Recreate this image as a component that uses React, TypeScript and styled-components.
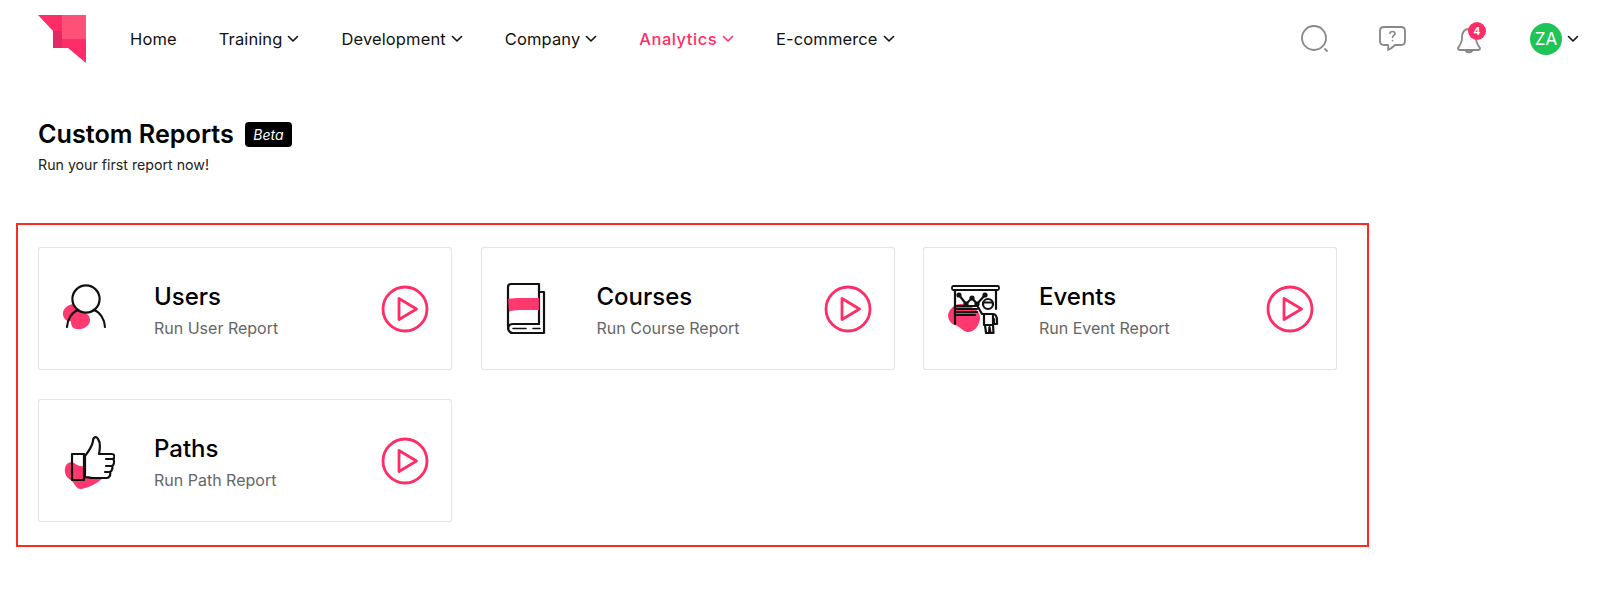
import styled, { createGlobalStyle } from 'styled-components';

const accent = '#ff2d67';

const GlobalStyle = createGlobalStyle`
  html, body {
    margin: 0;
    padding: 0;
    background: #fff;
    font-family: 'Inter', 'Noto Sans', sans-serif;
    color: #000;
  }
  * {
    box-sizing: border-box;
  }
`;

const Page = styled.div`
  width: 1600px;
  height: 612px;
  overflow: hidden;
`;

const Header = styled.header`
  display: flex;
  align-items: center;
  height: 78px;
  padding: 0 21px 0 38px;
`;

const Logo = styled.svg`
  width: 48px;
  height: 48px;
  margin-right: 44px;
  flex-shrink: 0;
`;

const Nav = styled.nav`
  display: flex;
  align-items: center;
  gap: 42px;
`;

const NavItem = styled.a<{ $active?: boolean }>`
  display: flex;
  align-items: center;
  gap: 5px;
  font-size: 16.5px;
  letter-spacing: ${(p) => (p.$active ? '0.5px' : '0.12px')};
  font-weight: ${(p) => (p.$active ? 500 : 400)};
  color: ${(p) => (p.$active ? accent : '#111')};
`;

const Chevron = styled.svg`
  width: 12px;
  height: 8px;
  flex-shrink: 0;
  fill: none;
  stroke: currentColor;
  stroke-width: 1.6;
  stroke-linecap: round;
  stroke-linejoin: round;
`;

const Tools = styled.div`
  display: flex;
  align-items: center;
  gap: 45px;
  margin-left: auto;
`;

const ToolIcon = styled.div`
  position: relative;
  width: 32px;
  height: 32px;
  color: #888;

  svg {
    display: block;
    width: 32px;
    height: 32px;
    fill: none;
    stroke: currentColor;
    stroke-width: 1.8;
    stroke-linecap: round;
    stroke-linejoin: round;
  }
`;

const Badge = styled.span`
  position: absolute;
  top: -1px;
  right: -1px;
  width: 18px;
  height: 18px;
  border-radius: 50%;
  background: ${accent};
  color: #fff;
  font-size: 10px;
  font-weight: 700;
  line-height: 18px;
  text-align: center;
`;

const Account = styled.div`
  display: flex;
  align-items: center;
  gap: 5px;
  color: #111;
`;

const Avatar = styled.div`
  width: 32px;
  height: 32px;
  border-radius: 50%;
  background: #1ec455;
  color: #fff;
  font-size: 17px;
  line-height: 32px;
  text-align: center;
`;

const Main = styled.main`
  padding: 40px 0 0 16px;
`;

const Intro = styled.div`
  padding-left: 22px;
`;

const TitleRow = styled.div`
  display: flex;
  align-items: center;
  gap: 11px;
  height: 32px;
`;

const Title = styled.h1`
  margin: 0;
  font-size: 25.2px;
  font-weight: 600;
  line-height: 32px;
`;

const BetaTag = styled.span`
  width: 47px;
  height: 25px;
  border-radius: 4px;
  background: #000;
  color: #fff;
  font-size: 14px;
  font-style: italic;
  line-height: 25px;
  text-align: center;
`;

const Subtitle = styled.p`
  margin: 5px 0 0;
  font-size: 14.2px;
  line-height: 20px;
  color: #222;
`;

const Frame = styled.section`
  width: 1353px;
  height: 324px;
  margin-top: 48px;
  padding: 22px 31px 22px 20px;
  border: 2px solid #ff2a1f;
`;

const CardGrid = styled.div`
  display: grid;
  grid-template-columns: repeat(3, 414px);
  grid-auto-rows: 123px;
  column-gap: 28.5px;
  row-gap: 29px;
`;

const Card = styled.article`
  display: flex;
  align-items: center;
  padding: 0 22px 0 20px;
  border: 1px solid #e4e4e4;
  border-radius: 3px;
  background: #fff;
  box-shadow: 0 0 1px #e4e4e4;
`;

const CardIcon = styled.svg`
  width: 56px;
  height: 60px;
  flex-shrink: 0;
  margin-right: 39px;
  fill: none;
  stroke: #111;
  stroke-width: 2.2;
  stroke-linecap: round;
  stroke-linejoin: round;
`;

const CardText = styled.div`
  flex: 1;
  padding-top: 2px;
`;

const CardTitle = styled.h2`
  margin: 0;
  font-size: 24px;
  font-weight: 500;
  line-height: 32px;
`;

const CardHint = styled.p`
  margin: 5px 0 0;
  font-size: 16px;
  line-height: 20px;
  color: #666;
`;

const PlayButton = styled.svg`
  width: 48px;
  height: 48px;
  flex-shrink: 0;
  fill: none;
  stroke: ${accent};
  stroke-width: 2.8;
  stroke-linejoin: round;
  stroke-linecap: round;
`;

const Blob = styled.path`
  fill: ${accent};
  fill-opacity: 0.95;
  stroke: none;
`;

const UsersIcon = () => (
  <CardIcon viewBox='0 0 56 60'>
    <Blob d='M4 36C3 30 9 25 15 25C20 24 23 27 20 31C25 33 31 35 31 41C31 47 24 51 18 50C13 50 12 46 12 42C8 43 5 40 4 36Z' />
    <circle cx='27' cy='20' r='13.6' fill='#fff' />
    <path d='M8 48C8.6 40 13 33 19 31M35 31C41 33 45.5 40 46 48' />
  </CardIcon>
);

const CoursesIcon = () => (
  <CardIcon viewBox='0 0 56 60' strokeWidth='2.4'>
    <path d='M37 45V5H9C7 5 6 6.500 6 8V47C6 52 8 54 11 54H42V13H37' />
    <path d='M37 45H11C8 45 6 47 6 50' />
    <path d='M11 49.500H24M31 49.500H38' strokeWidth='1.6' />
    <Blob d='M6 20C15 18 27 19.500 37 19V31C27 31.500 15 30 7 32.500Z' />
  </CardIcon>
);

const EventsIcon = () => (
  <CardIcon viewBox='0 0 56 60' strokeWidth='1.4'>
    <Blob d='M4 36C5 30 11 24 18 25C24 26 36 30 36 38C36 46 31 53 24 53C19 53 17 48 11 46C7 45 4 41 4 36Z' />
    <rect x='8' y='7' width='47' height='4' rx='1.500' strokeWidth='1.8' />
    <path d='M11 11V45M52 11V30' />
    <path d='M15 16L22 25L28 19L33 25L41 16' />
    <circle cx='15' cy='16' r='1.500' />
    <circle cx='22' cy='25' r='1.500' />
    <circle cx='28' cy='19' r='1.500' />
    <circle cx='33' cy='25' r='1.500' />
    <circle cx='41' cy='16' r='1.500' />
    <path d='M13 27H33M13 30H33M13 33H33M13 36H31' />
    <path d='M34 28L38 35H49C52 35 53 38 53 42V45H50V40M40 35V46H49V35M41 46L42 54H45L45.500 48L46.500 54H49.500L49 46' fill='#fff' />
    <circle cx='44' cy='25' r='5' fill='#fff' />
    <path d='M39.500 23.500H48' />
  </CardIcon>
);

const PathsIcon = () => (
  <CardIcon viewBox='0 0 56 60'>
    <Blob d='M6 37C7 32 11 30 15 32C18 34 21 36 26 35C31 34 42 36 46 43C44 50 30 57 22 58C17 58 16 53 12 49C8 47 5 43 6 37Z' />
    <path d='M26 25C30 20 33 16 34 10C34 6 37 5 39 8C42 12 41 18 40 23H53C56 23 56 27 54 28C56 30 55 34 53 35C54 37 53 40 51 41C52 44 50 47 48 47H34C31 47 28 46 26 46Z' fill='#fff' />
    <path d='M53 28H47M53 35H47M51 41H46' />
    <rect x='13' y='23' width='12' height='26' />
  </CardIcon>
);

const reports = [
  { key: 'users', title: 'Users', hint: 'Run User Report', Icon: UsersIcon },
  { key: 'courses', title: 'Courses', hint: 'Run Course Report', Icon: CoursesIcon },
  { key: 'events', title: 'Events', hint: 'Run Event Report', Icon: EventsIcon },
  { key: 'paths', title: 'Paths', hint: 'Run Path Report', Icon: PathsIcon },
];

const navItems = [
  { label: 'Home' },
  { label: 'Training', menu: true },
  { label: 'Development', menu: true },
  { label: 'Company', menu: true },
  { label: 'Analytics', menu: true, active: true },
  { label: 'E-commerce', menu: true },
];

const Caret = () => (
  <Chevron viewBox='0 0 12 8'>
    <path d='M1.500 1.500L6 6L10.500 1.500' />
  </Chevron>
);

const App = () => {
  return (
    <Page>
      <GlobalStyle />
      <Header>
        <Logo viewBox='0 0 48 48'>
          <path d='M0 0H24V16H15Z' fill='#ff2d67' />
          <path d='M24 0H48V24H24Z' fill='#ff5078' />
          <path d='M15 16H24V24H30V33H15Z' fill='#e22b66' />
          <path d='M24 24H48V48L30 33H24Z' fill='#ff2d67' />
        </Logo>
        <Nav>
          {navItems.map((item) => (
            <NavItem key={item.label} $active={item.active}>
              {item.label}
              {item.menu && <Caret />}
            </NavItem>
          ))}
        </Nav>
        <Tools>
          <ToolIcon>
            <svg viewBox='0 0 32 32'>
              <circle cx='15' cy='15' r='12' />
              <path d='M26 26L28 28' />
            </svg>
          </ToolIcon>
          <ToolIcon>
            <svg viewBox='0 0 32 32'>
              <path d='M8 4H25C27.500 4 29 5.500 29 8V18C29 20.500 27.500 22 25 22H19C17 24 15 26 12 27C12.500 25 12.500 23.500 12 22H8C5.500 22 4 20.500 4 18V8C4 5.500 5.500 4 8 4Z' />
              <path d='M14 10.500C14 9 15.200 8.500 16.400 8.500C18 8.500 19 9.500 19 10.700C19 12.500 16.500 12.500 16.500 14.500M16.500 17.500V17.700' strokeWidth='1.600' />
            </svg>
          </ToolIcon>
          <ToolIcon>
            <svg viewBox='0 0 32 32'>
              <path d='M16 6C10 6 9 11 9 15C9 19 8 21 5 25C5 26 6 27 7 27H25C26 27 27 26 27 25C24 21 23 19 23 15C23 11 22 6 16 6Z' />
              <path d='M12.500 27C13 30 19 30 19.500 27' />
            </svg>
            <Badge>4</Badge>
          </ToolIcon>
          <Account>
            <Avatar>ZA</Avatar>
            <Caret />
          </Account>
        </Tools>
      </Header>
      <Main>
        <Intro>
          <TitleRow>
            <Title>Custom Reports</Title>
            <BetaTag>Beta</BetaTag>
          </TitleRow>
          <Subtitle>Run your first report now!</Subtitle>
        </Intro>
        <Frame>
          <CardGrid>
            {reports.map(({ key, title, hint, Icon }) => (
              <Card key={key}>
                <Icon />
                <CardText>
                  <CardTitle>{title}</CardTitle>
                  <CardHint>{hint}</CardHint>
                </CardText>
                <PlayButton viewBox='0 0 48 48'>
                  <circle cx='24' cy='24' r='22' />
                  <path d='M18 13.500V34.500L35.500 24Z' />
                </PlayButton>
              </Card>
            ))}
          </CardGrid>
        </Frame>
      </Main>
    </Page>
  );
};

export default App;
